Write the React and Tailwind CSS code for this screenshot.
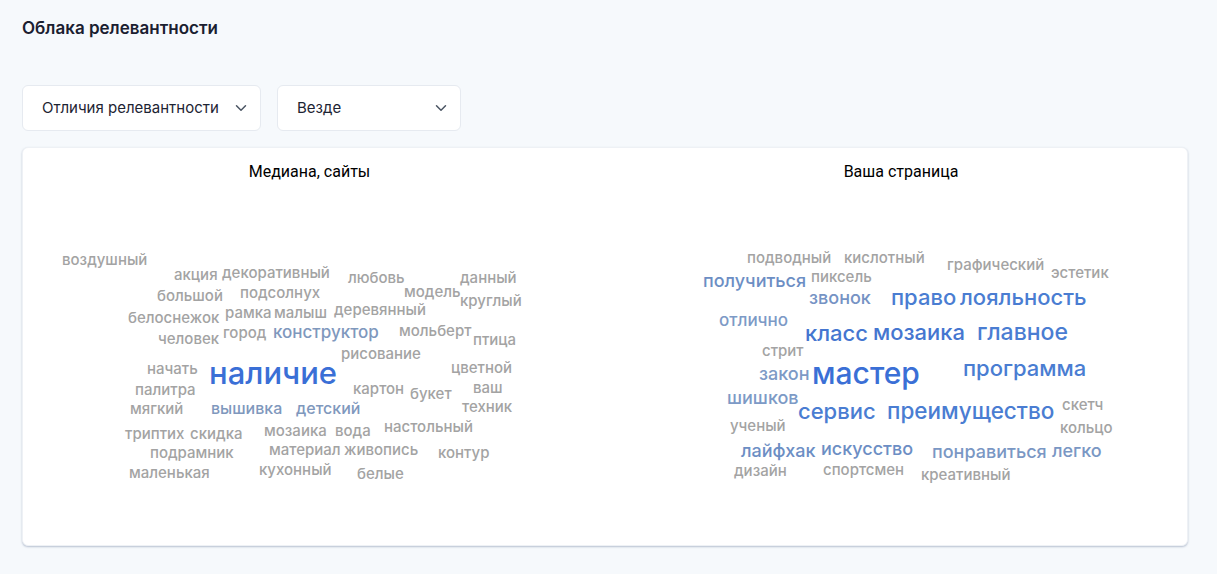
import { ChevronDown } from 'lucide-react'

const gray = 'text-[#a3a3a3] text-[15px]'

// word cloud: left/top are the word centers on the canvas
const medianWords = [
  { t: 'воздушный', c: `${gray} left-[39px] top-[111px]` },
  { t: 'акция', c: `${gray} left-[151px] top-[126px]` },
  { t: 'декоративный', c: `${gray} left-[199px] top-[124px]` },
  { t: 'любовь', c: `${gray} left-[325px] top-[129px]` },
  { t: 'данный', c: `${gray} left-[437px] top-[129px]` },
  { t: 'большой', c: `${gray} left-[134px] top-[147px]` },
  { t: 'подсолнух', c: `${gray} left-[217px] top-[144px]` },
  { t: 'модель', c: `${gray} left-[381px] top-[143px]` },
  { t: 'круглый', c: `${gray} left-[437px] top-[152px]` },
  { t: 'белоснежок', c: `${gray} left-[105px] top-[169px]` },
  { t: 'рамка', c: `${gray} left-[202px] top-[164px]` },
  { t: 'малыш', c: `${gray} left-[251px] top-[164px]` },
  { t: 'деревянный', c: `${gray} left-[311px] top-[161px]` },
  { t: 'человек', c: `${gray} left-[135px] top-[190px]` },
  { t: 'город', c: `${gray} left-[200px] top-[184px]` },
  { t: 'конструктор', c: 'text-[#7f98bd] text-[17px] left-[250px] top-[184px]' },
  { t: 'мольберт', c: `${gray} left-[376px] top-[182px]` },
  { t: 'птица', c: `${gray} left-[450px] top-[191px]` },
  { t: 'рисование', c: `${gray} left-[318px] top-[205px]` },
  { t: 'начать', c: `${gray} left-[124px] top-[220px]` },
  { t: 'наличие', c: 'text-[#3a6fd6] text-[31px] left-[186px] top-[224px]' },
  { t: 'цветной', c: `${gray} left-[428px] top-[219px]` },
  { t: 'палитра', c: `${gray} left-[112px] top-[241px]` },
  { t: 'картон', c: `${gray} left-[330px] top-[240px]` },
  { t: 'букет', c: `${gray} left-[387px] top-[245px]` },
  { t: 'ваш', c: `${gray} left-[450px] top-[239px]` },
  { t: 'мягкий', c: `${gray} left-[107px] top-[260px]` },
  { t: 'вышивка', c: 'text-[#7f98bd] text-[16px] left-[188px] top-[260px]' },
  { t: 'детский', c: 'text-[#7f98bd] text-[16px] left-[273px] top-[260px]' },
  { t: 'техник', c: `${gray} left-[439px] top-[258px]` },
  { t: 'триптих', c: `${gray} left-[102px] top-[285px]` },
  { t: 'скидка', c: `${gray} left-[167px] top-[285px]` },
  { t: 'мозаика', c: `${gray} left-[241px] top-[282px]` },
  { t: 'вода', c: `${gray} left-[312px] top-[282px]` },
  { t: 'настольный', c: `${gray} left-[361px] top-[278px]` },
  { t: 'подрамник', c: `${gray} left-[127px] top-[304px]` },
  { t: 'материал', c: `${gray} left-[246px] top-[301px]` },
  { t: 'живопись', c: `${gray} left-[321px] top-[301px]` },
  { t: 'контур', c: `${gray} left-[415px] top-[304px]` },
  { t: 'маленькая', c: `${gray} left-[106px] top-[324px]` },
  { t: 'кухонный', c: `${gray} left-[236px] top-[321px]` },
  { t: 'белые', c: `${gray} left-[334px] top-[325px]` },
]

const pageWords = [
  { t: 'подводный', c: `${gray} left-[142px] top-[109px]` },
  { t: 'кислотный', c: `${gray} left-[239px] top-[109px]` },
  { t: 'графический', c: `${gray} left-[342px] top-[116px]` },
  { t: 'эстетик', c: `${gray} left-[446px] top-[124px]` },
  { t: 'получиться', c: 'text-[#6c8ec4] text-[18px] left-[98px] top-[133px]' },
  { t: 'пиксель', c: `${gray} left-[206px] top-[128px]` },
  { t: 'звонок', c: 'text-[#7593c4] text-[18px] left-[204px] top-[150px]' },
  { t: 'право', c: 'text-[#4a7dd2] text-[22px] left-[286px] top-[149px]' },
  { t: 'лояльность', c: 'text-[#4a7dd2] text-[22px] left-[355px] top-[149px]' },
  { t: 'отлично', c: 'text-[#7d9ac6] text-[17px] left-[114px] top-[172px]' },
  { t: 'класс', c: 'text-[#4576d0] text-[22px] left-[200px] top-[185px]' },
  { t: 'мозаика', c: 'text-[#4576d0] text-[22px] left-[268px] top-[184px]' },
  { t: 'главное', c: 'text-[#4a7dd2] text-[23px] left-[372px] top-[184px]' },
  { t: 'стрит', c: `${gray} left-[157px] top-[202px]` },
  { t: 'закон', c: 'text-[#7d9ac6] text-[18px] left-[154px] top-[226px]' },
  { t: 'мастер', c: 'text-[#3a6fd6] text-[30px] left-[207px] top-[225px]' },
  { t: 'программа', c: 'text-[#4a7dd2] text-[22px] left-[358px] top-[220px]' },
  { t: 'шишков', c: 'text-[#7d9ac6] text-[18px] left-[122px] top-[250px]' },
  { t: 'сервис', c: 'text-[#4a7dd2] text-[22px] left-[193px] top-[263px]' },
  { t: 'преимущество', c: 'text-[#4a7dd2] text-[22.5px] left-[282px] top-[263px]' },
  { t: 'скетч', c: `${gray} left-[457px] top-[256px]` },
  { t: 'ученый', c: `${gray} left-[125px] top-[277px]` },
  { t: 'кольцо', c: `${gray} left-[455px] top-[279px]` },
  { t: 'лайфхак', c: 'text-[#6c8ec4] text-[18px] left-[136px] top-[303px]' },
  { t: 'искусство', c: 'text-[#6c8ec4] text-[18px] left-[216px] top-[301px]' },
  { t: 'понравиться', c: 'text-[#7a97c4] text-[18px] left-[327px] top-[304px]' },
  { t: 'легко', c: 'text-[#7a97c4] text-[18px] left-[447px] top-[303px]' },
  { t: 'дизайн', c: `${gray} left-[129px] top-[322px]` },
  { t: 'спортсмен', c: `${gray} left-[218px] top-[321px]` },
  { t: 'креативный', c: `${gray} left-[316px] top-[326px]` },
]

function Select({ label, width }) {
  return (
    <button className={`flex items-center justify-between h-[46px] ${width} pl-[19px] pr-[10px] bg-white border border-[#e6eaf0] rounded-[6px] text-[15px] text-[#1d2433]`}>
      <span>{label}</span>
      <ChevronDown size={18} strokeWidth={2} className="text-[#4b5563]" />
    </button>
  )
}

function Cloud({ title, words, pad }) {
  return (
    <div className="relative flex-1 h-full">
      <h3 className={`pt-[14px] text-center text-[16px] leading-5 text-black font-['Roboto',sans-serif] ${pad}`}>{title}</h3>
      {words.map((w) => (
        <span
          key={w.t}
          className={`absolute -translate-y-1/2 whitespace-nowrap leading-none font-medium ${w.c}`}
        >
          {w.t}
        </span>
      ))}
    </div>
  )
}

export default function App() {
  return (
    <div className="min-h-[574px] bg-[#f6f9fc] font-['Inter',sans-serif] pt-[16px] px-[22px] pr-[29px]">
      <h1 className="text-[17px] leading-6 font-semibold text-[#1a2030]">Облака релевантности</h1>

      <div className="flex gap-[16px] mt-[45px]">
        <Select label="Отличия релевантности" width="w-[239px]" />
        <Select label="Везде" width="w-[184px]" />
      </div>

      <div className="flex mt-[16px] h-[399px] bg-white rounded-[6px] shadow-[0_1px_2px_rgba(140,155,180,0.6)] border border-[#eef1f5]">
        <Cloud title="Медиана, сайты" words={medianWords} pad="pr-[9px]" />
        <Cloud title="Ваша страница" words={pageWords} pad="pl-[10px]" />
      </div>
    </div>
  )
}
